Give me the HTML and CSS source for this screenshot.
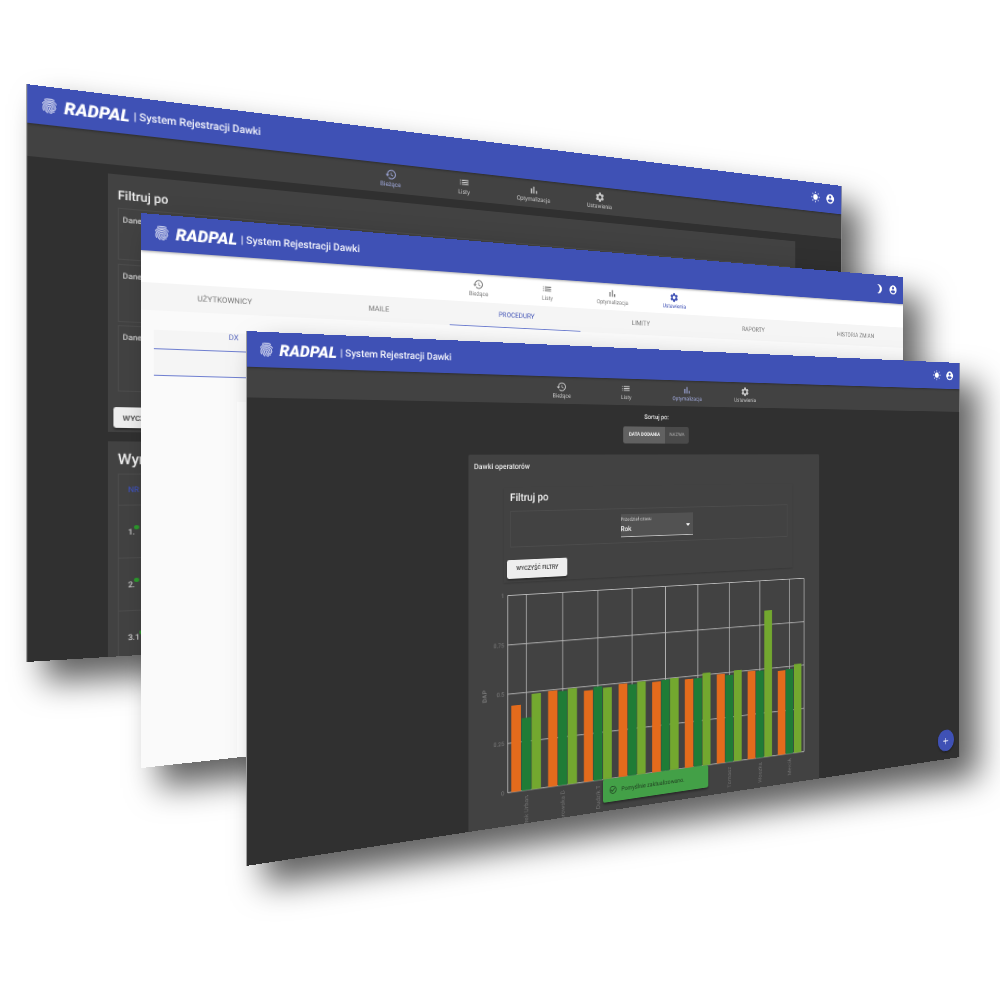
FILE: index.html
```html
<!DOCTYPE html>
<html lang="pl">
<head>
<meta charset="utf-8">
<title>RADPAL</title>
<link rel="stylesheet" href="styles.css">
</head>
<body>
<svg class="defs" aria-hidden="true">
<symbol id="i-print" viewBox="0 0 24 24"><path d="M17.81 4.47c-.08 0-.16-.02-.23-.06C15.66 3.42 14 3 12.01 3c-1.98 0-3.86.47-5.57 1.41-.24.13-.54.04-.68-.2-.13-.24-.04-.55.2-.68C7.82 2.52 9.86 2 12.01 2c2.13 0 3.99.47 6.03 1.52.25.13.34.43.21.67-.09.18-.26.28-.44.28zM3.5 9.72c-.1 0-.2-.03-.29-.09-.23-.16-.28-.47-.12-.7.99-1.4 2.25-2.5 3.75-3.27C9.98 4.04 14 4.03 17.15 5.65c1.5.77 2.76 1.86 3.75 3.25.16.22.11.54-.12.7-.23.16-.54.11-.7-.12-.9-1.26-2.04-2.25-3.39-2.94-2.87-1.47-6.54-1.47-9.4.01-1.36.7-2.5 1.7-3.4 2.96-.08.14-.23.21-.39.21zm6.25 12.07c-.13 0-.26-.05-.35-.15-.87-.87-1.34-1.43-2.01-2.64-.69-1.23-1.05-2.73-1.05-4.34 0-2.97 2.54-5.39 5.66-5.39s5.66 2.42 5.66 5.39c0 .28-.22.5-.5.5s-.5-.22-.5-.5c0-2.42-2.09-4.39-4.66-4.39-2.57 0-4.66 1.97-4.66 4.39 0 1.44.32 2.77.93 3.85.64 1.15 1.08 1.64 1.85 2.42.19.2.19.51 0 .71-.11.1-.24.15-.37.15zm7.17-1.85c-1.19 0-2.24-.3-3.1-.89-1.49-1.01-2.38-2.65-2.38-4.39 0-.28.22-.5.5-.5s.5.22.5.5c0 1.41.72 2.74 1.94 3.56.71.48 1.54.71 2.54.71.24 0 .64-.03 1.04-.1.27-.05.53.13.58.41.05.27-.13.53-.41.58-.57.11-1.07.12-1.21.12zM14.91 22c-.04 0-.09-.01-.13-.02-1.59-.44-2.63-1.03-3.72-2.1-1.4-1.39-2.17-3.24-2.17-5.22 0-1.62 1.38-2.94 3.08-2.94 1.7 0 3.08 1.32 3.08 2.94 0 1.07.93 1.94 2.08 1.94s2.08-.87 2.08-1.94c0-3.77-3.25-6.83-7.25-6.83-2.84 0-5.44 1.58-6.61 4.03-.39.81-.59 1.76-.59 2.8 0 .78.07 2.01.67 3.61.1.26-.03.55-.29.64-.26.1-.55-.04-.64-.29-.49-1.31-.73-2.61-.73-3.96 0-1.2.23-2.29.68-3.24 1.33-2.79 4.28-4.6 7.51-4.6 4.55 0 8.25 3.51 8.25 7.83 0 1.62-1.38 2.94-3.08 2.94s-3.08-1.32-3.08-2.94c0-1.07-.93-1.94-2.08-1.94s-2.08.87-2.08 1.94c0 1.71.66 3.31 1.87 4.51.95.94 1.86 1.46 3.27 1.85.27.07.42.35.35.61-.05.23-.26.38-.47.38z"/></symbol>
<symbol id="i-history" viewBox="0 0 24 24"><path d="M13 3c-4.97 0-9 4.03-9 9H1l3.89 3.89.07.14L9 12H6c0-3.87 3.13-7 7-7s7 3.13 7 7-3.13 7-7 7c-1.93 0-3.68-.79-4.94-2.06l-1.42 1.42C8.27 19.99 10.51 21 13 21c4.97 0 9-4.03 9-9s-4.03-9-9-9zm-1 5v5l4.28 2.54.72-1.21-3.5-2.08V8H12z"/></symbol>
<symbol id="i-list" viewBox="0 0 24 24"><path d="M3 13h2v-2H3v2zm0 4h2v-2H3v2zm0-8h2V7H3v2zm4 4h14v-2H7v2zm0 4h14v-2H7v2zM7 7v2h14V7H7z"/></symbol>
<symbol id="i-bars" viewBox="0 0 24 24"><path d="M5 9.2h3V19H5zM10.6 5h2.8v14h-2.8zm5.6 8H19v6h-2.8z"/></symbol>
<symbol id="i-gear" viewBox="0 0 24 24"><path d="M19.14 12.94c.04-.3.06-.61.06-.94 0-.32-.02-.64-.07-.94l2.03-1.58c.18-.14.23-.41.12-.61l-1.92-3.32c-.12-.22-.37-.29-.59-.22l-2.39.96c-.5-.38-1.03-.7-1.62-.94l-.36-2.54c-.04-.24-.24-.41-.48-.41h-3.84c-.24 0-.43.17-.47.41l-.36 2.54c-.59.24-1.13.57-1.62.94l-2.39-.96c-.22-.08-.47 0-.59.22L2.74 8.87c-.12.21-.08.47.12.61l2.03 1.58c-.05.3-.09.63-.09.94s.02.64.07.94l-2.03 1.58c-.18.14-.23.41-.12.61l1.92 3.32c.12.22.37.29.59.22l2.39-.96c.5.38 1.03.7 1.62.94l.36 2.54c.05.24.24.41.48.41h3.84c.24 0 .44-.17.47-.41l.36-2.54c.59-.24 1.13-.56 1.62-.94l2.39.96c.22.08.47 0 .59-.22l1.92-3.32c.12-.22.07-.47-.12-.61l-2.01-1.58zM12 15.6c-1.98 0-3.6-1.62-3.6-3.6s1.62-3.6 3.6-3.6 3.6 1.62 3.6 3.6-1.62 3.6-3.6 3.6z"/></symbol>
<symbol id="i-user" viewBox="0 0 24 24"><path d="M12 2C6.48 2 2 6.48 2 12s4.48 10 10 10 10-4.48 10-10S17.52 2 12 2zm0 3c1.66 0 3 1.34 3 3s-1.34 3-3 3-3-1.34-3-3 1.34-3 3-3zm0 14.2c-2.5 0-4.71-1.28-6-3.22.03-1.99 4-3.08 6-3.08 1.99 0 5.97 1.09 6 3.08-1.29 1.94-3.5 3.22-6 3.22z"/></symbol>
<symbol id="i-sun" viewBox="0 0 24 24"><path d="M6.76 4.84l-1.8-1.79-1.41 1.41 1.79 1.79 1.42-1.41zM4 10.5H1v2h3v-2zm9-9.95h-2V3.5h2V.55zm7.45 3.91l-1.41-1.41-1.79 1.79 1.41 1.41 1.79-1.79zm-3.21 13.7l1.79 1.8 1.41-1.41-1.8-1.79-1.4 1.4zM20 10.5v2h3v-2h-3zm-8-5c-3.31 0-6 2.69-6 6s2.69 6 6 6 6-2.69 6-6-2.69-6-6-6zm-1 16.95h2V19.5h-2v2.95zm-7.45-3.91l1.41 1.41 1.79-1.8-1.41-1.41-1.79 1.8z"/></symbol>
<symbol id="i-moon" viewBox="0 0 24 24"><path d="M9 2c-1.05 0-2.05.16-3 .46 4.06 1.27 7 5.06 7 9.54 0 4.48-2.94 8.27-7 9.54.95.3 1.95.46 3 .46 5.52 0 10-4.48 10-10S14.52 2 9 2z"/></symbol>
<symbol id="i-check" viewBox="0 0 24 24"><path d="M16.59 7.58L10 14.17l-3.59-3.58L5 12l5 5 8-8zM12 2C6.48 2 2 6.48 2 12s4.48 10 10 10 10-4.48 10-10S17.52 2 12 2zm0 18c-4.42 0-8-3.58-8-8s3.58-8 8-8 8 3.58 8 8-3.58 8-8 8z"/></symbol>
<symbol id="i-add" viewBox="0 0 24 24"><path d="M19 13h-6v6h-2v-6H5v-2h6V5h2v6h6v2z"/></symbol>
</svg>

<main class="scene">

<!-- back window: dark, search page -->
<div class="layer">
<section class="win win-back"><div class="page page-dark">
  <header class="bar">
    <svg class="logo"><use href="#i-print"/></svg>
    <span class="brand">RADPAL</span><span class="subtitle">| System Rejestracji Dawki</span>
    <span class="bar-icons"><svg class="icon"><use href="#i-sun"/></svg><svg class="icon"><use href="#i-user"/></svg></span>
  </header>
  <nav class="nav nav-shift">
    <a class="nav-item is-active"><svg class="icon"><use href="#i-history"/></svg><span>Bieżące</span></a>
    <a class="nav-item"><svg class="icon"><use href="#i-list"/></svg><span>Listy</span></a>
    <a class="nav-item"><svg class="icon"><use href="#i-bars"/></svg><span>Optymalizacja</span></a>
    <a class="nav-item"><svg class="icon"><use href="#i-gear"/></svg><span>Ustawienia</span></a>
  </nav>
  <div class="back-main">
    <div class="back-panel">
      <h2 class="filter-title">Filtruj po</h2>
      <div class="data-box box-a">Dane</div>
      <div class="data-box box-b">Dane</div>
      <div class="data-box box-c">Dane</div>
      <button class="clear-btn back-btn">WYCZYŚĆ FILTRY</button>
    </div>
    <div class="back-panel results">
      <h2 class="results-title">Wyniki</h2>
      <div class="table">
        <div class="th">NR</div>
        <div class="tr">1.<i class="dot"></i></div>
        <div class="tr">2.<i class="dot"></i></div>
        <div class="tr">3.1<i class="dot"></i></div>
      </div>
    </div>
  </div>
</div></section>
</div>

<!-- middle window: light, settings page -->
<div class="layer">
<section class="win win-mid"><div class="page page-light">
  <header class="bar">
    <svg class="logo"><use href="#i-print"/></svg>
    <span class="brand">RADPAL</span><span class="subtitle">| System Rejestracji Dawki</span>
    <span class="bar-icons"><svg class="icon"><use href="#i-moon"/></svg><svg class="icon"><use href="#i-user"/></svg></span>
  </header>
  <nav class="nav">
    <a class="nav-item"><svg class="icon"><use href="#i-history"/></svg><span>Bieżące</span></a>
    <a class="nav-item"><svg class="icon"><use href="#i-list"/></svg><span>Listy</span></a>
    <a class="nav-item"><svg class="icon"><use href="#i-bars"/></svg><span>Optymalizacja</span></a>
    <a class="nav-item is-active"><svg class="icon"><use href="#i-gear"/></svg><span>Ustawienia</span></a>
  </nav>
  <div class="tabs">
    <span class="tab">UŻYTKOWNICY</span>
    <span class="tab">MAILE</span>
    <span class="tab is-on">PROCEDURY</span>
    <span class="tab">LIMITY</span>
    <span class="tab">RAPORTY</span>
    <span class="tab">HISTORIA ZMIAN</span>
  </div>
  <div class="sub">
    <div class="sub-tab">DX</div>
    <div class="sub-row"></div>
  </div>
  <div class="sub-card"></div>
</div></section>
</div>

<!-- front window: dark, optimisation page -->
<div class="layer">
<section class="win win-front"><div class="page page-dark">
  <header class="bar">
    <svg class="logo"><use href="#i-print"/></svg>
    <span class="brand">RADPAL</span><span class="subtitle">| System Rejestracji Dawki</span>
    <span class="bar-icons"><svg class="icon"><use href="#i-sun"/></svg><svg class="icon"><use href="#i-user"/></svg></span>
  </header>
  <nav class="nav">
    <a class="nav-item"><svg class="icon"><use href="#i-history"/></svg><span>Bieżące</span></a>
    <a class="nav-item"><svg class="icon"><use href="#i-list"/></svg><span>Listy</span></a>
    <a class="nav-item is-active"><svg class="icon"><use href="#i-bars"/></svg><span>Optymalizacja</span></a>
    <a class="nav-item"><svg class="icon"><use href="#i-gear"/></svg><span>Ustawienia</span></a>
  </nav>
  <div class="sort">
    <p class="sort-label">Sortuj po:</p>
    <div class="toggle"><span class="toggle-on">DATA DODANIA</span><span class="toggle-off">NAZWA</span></div>
  </div>
  <div class="panel">
    <h3 class="panel-title">Dawki operatorów</h3>
    <div class="filter-card">
      <h2 class="filter-title">Filtruj po</h2>
      <div class="filter-box">
        <div class="select">
          <span class="select-label">Przedział czasu</span>
          <span class="select-value">Rok</span>
          <i class="caret"></i>
        </div>
      </div>
      <button class="clear-btn front-btn">WYCZYŚĆ FILTRY</button>
    </div>
    <svg class="chart" viewBox="0 0 800 450" width="800" height="450">
      <g class="grid">
        <line x1="78" y1="21" x2="760" y2="21"/><line x1="78" y1="112.75" x2="760" y2="112.75"/><line x1="78" y1="204.5" x2="760" y2="204.5"/><line x1="78" y1="296.25" x2="760" y2="296.25"/><line x1="78" y1="388" x2="760" y2="388"/>
        <line x1="78" y1="21" x2="78" y2="388"/><line x1="115.9" y1="21" x2="115.9" y2="388"/><line x1="191.7" y1="21" x2="191.7" y2="388"/><line x1="267.5" y1="21" x2="267.5" y2="388"/><line x1="343.3" y1="21" x2="343.3" y2="388"/><line x1="419.1" y1="21" x2="419.1" y2="388"/><line x1="494.9" y1="21" x2="494.9" y2="388"/><line x1="570.7" y1="21" x2="570.7" y2="388"/><line x1="646.5" y1="21" x2="646.5" y2="388"/><line x1="722.3" y1="21" x2="722.3" y2="388"/><line x1="760" y1="21" x2="760" y2="388"/>
      </g>
      <g class="s-orange">
        <rect x="85.4" y="226.5" width="19.5" height="161.5"/><rect x="161.2" y="206.3" width="19.5" height="181.7"/><rect x="237" y="212.6" width="19.5" height="175.4"/><rect x="312.8" y="206.3" width="19.5" height="181.7"/><rect x="388.6" y="208.9" width="19.5" height="179.1"/><rect x="464.4" y="210" width="19.5" height="178"/><rect x="540.2" y="206.3" width="19.5" height="181.7"/><rect x="616" y="206.3" width="19.5" height="181.7"/><rect x="691.8" y="211.8" width="19.5" height="176.2"/>
      </g>
      <g class="s-green">
        <rect x="106.15" y="252.2" width="19.5" height="135.8"/><rect x="181.95" y="208.9" width="19.5" height="179.1"/><rect x="257.75" y="207.1" width="19.5" height="180.9"/><rect x="333.55" y="209.3" width="19.5" height="178.7"/><rect x="409.35" y="206.7" width="19.5" height="181.3"/><rect x="485.15" y="210" width="19.5" height="178"/><rect x="560.95" y="210" width="19.5" height="178"/><rect x="636.75" y="207.4" width="19.5" height="180.6"/><rect x="712.55" y="210" width="19.5" height="178"/>
      </g>
      <g class="s-lime">
        <rect x="126.9" y="208.2" width="19.5" height="179.8"/><rect x="202.7" y="205.6" width="19.5" height="182.4"/><rect x="278.5" y="210.4" width="19.5" height="177.6"/><rect x="354.3" y="205.6" width="19.5" height="182.4"/><rect x="430.1" y="205.2" width="19.5" height="182.8"/><rect x="505.9" y="200.8" width="19.5" height="187.2"/><rect x="581.7" y="201.6" width="19.5" height="186.4"/><rect x="657.5" y="83.4" width="19.5" height="304.6"/><rect x="733.3" y="200.8" width="19.5" height="187.2"/>
      </g>
      <g class="y-labels">
        <text x="71" y="25">1</text><text x="71" y="117">0.75</text><text x="71" y="208">0.5</text><text x="71" y="300">0.25</text><text x="71" y="392">0</text>
      </g>
      <text class="y-title" transform="translate(36 205) rotate(-90)">DAP</text>
      <g class="x-labels">
        <text transform="translate(120 398) rotate(-90)">Marek Urban</text>
        <text transform="translate(196 398) rotate(-90)">Dąbrowska D</text>
        <text transform="translate(272 398) rotate(-90)">Dudzik T</text>
        <text transform="translate(347 398) rotate(-90)">Gajda</text>
        <text transform="translate(423 398) rotate(-90)">Kania</text>
        <text transform="translate(499 398) rotate(-90)">Kos</text>
        <text transform="translate(575 398) rotate(-90)">Tomasz</text>
        <text transform="translate(651 398) rotate(-90)">Woszka</text>
        <text transform="translate(726 398) rotate(-90)">Mercik</text>
      </g>
    </svg>
  </div>
  <div class="snackbar"><svg class="icon snack-icon"><use href="#i-check"/></svg>Pomyślnie zaktualizowano.</div>
  <button class="fab" aria-label="Dodaj"><svg class="icon fab-icon"><use href="#i-add"/></svg></button>
</div></section>
</div>

</main>
</body>
</html>
```
FILE: styles.css
```css
* { box-sizing: border-box; }
html, body { margin: 0; padding: 0; background: #fff; }
body { font-family: Roboto, "Noto Sans", "Liberation Sans", sans-serif; text-rendering: geometricPrecision; }
.defs { position: absolute; width: 0; height: 0; }

.scene { position: relative; width: 1000px; height: 1000px; overflow: hidden; background: #fff; }
.layer { position: absolute; inset: 0; filter: blur(0.5px) drop-shadow(18px 20px 16px rgba(0, 0, 0, 0.62)); }

/* windows lying on a free canvas, tilted in perspective */
.win { position: absolute; left: 0; top: 0; width: 960px; height: 540px; overflow: hidden; transform-origin: 0 0; }
.win-back { transform: matrix3d(1.16295,.17539,0,.00037168, 0,1.07037,0,0, 0,0,1,0, 26,84,0,1); }
.win-mid { transform: matrix3d(1.13336,.17063,0,.00037531, 0,1.02778,0,0, 0,0,1,0, 141,213,0,1); }
.win-front { transform: matrix3d(1.10161,.16866,0,.00037278, 0,.99074,0,0, 0,0,1,0, 246,331,0,1); }

.page { zoom: .6; position: relative; width: 1600px; height: 900px; overflow: hidden; }
.page-dark { background: #303030; color: #fff; border-left: 2px solid #a0a0a0; border-right: 2px solid #a0a0a0; }
.page-light { background: #fafafa; color: #555; }

.icon { width: 24px; height: 24px; fill: currentColor; display: block; flex: none; }

.bar { height: 60px; background: #3f51b5; color: #fff; display: flex; align-items: center; padding: 0 18px; position: relative; box-shadow: 0 2px 4px rgba(0, 0, 0, .35); }
.logo { width: 28px; height: 30px; fill: #e2e5f6; stroke: #e2e5f6; stroke-width: .35; flex: none; }
.brand { margin-left: 8px; font-size: 27px; font-weight: 900; font-style: italic; letter-spacing: .2px; }
.subtitle { margin-left: 6px; font-size: 17.5px; font-weight: 500; color: #f2f3fb; }
.bar-icons { margin-left: auto; display: flex; gap: 14px; }

.nav { height: 52px; display: flex; justify-content: center; background: #424242; color: #c8c8c8; }
.nav-shift { padding-left: 14px; }
.page-light .nav { background: #fff; color: #777; }
.nav-item { width: 140px; display: flex; flex-direction: column; align-items: center; justify-content: center; font-size: 11px; line-height: 13px; }
.nav-item .icon { width: 22px; height: 22px; margin-bottom: 1px; }
.nav-item.is-active { color: #9fa8da; }
.page-light .nav-item.is-active { color: #3f51b5; }

/* back window */
.back-main { padding: 14px 120px 0; }
.back-panel { background: #424242; padding: 22px 15px 6px; }
.back-panel.results { margin-top: 15px; padding-top: 18px; }
.filter-title { margin: 0; font-size: 20px; line-height: 24px; font-weight: 500; color: #f0f0f0; }
.data-box { border: 1px solid #4c4c4c; font-size: 13px; font-weight: 500; color: #ccc; padding: 10px 6px; margin-bottom: 6px; }
.box-a { margin-top: 8px; height: 84px; }
.box-b { height: 93px; }
.box-c { height: 106px; }
.clear-btn { border: 0; border-radius: 4px; background: #eee; color: #3a3a3a; font: 500 11px Roboto, sans-serif; box-shadow: 0 2px 3px rgba(0, 0, 0, .3); padding: 0; }
.back-btn { display: block; margin: 25px 0 0 -7px; width: 132px; height: 34px; font-size: 13px; }
.results-title { margin: 0 0 10px; font-size: 24px; line-height: 24px; font-weight: 500; color: #eee; }
.table { border: 1px solid #4c4c4c; }
.th { height: 50px; padding-left: 14px; line-height: 50px; font-size: 13px; font-weight: 500; color: #3f51b5; border-bottom: 1px solid #4c4c4c; }
.tr { height: 85px; padding-left: 14px; line-height: 85px; font-size: 13px; font-weight: 500; color: #d0d0d0; border-bottom: 1px solid #4c4c4c; }
.dot { display: inline-block; width: 8px; height: 8px; border-radius: 50%; background: #2c9c2c; margin-left: -1px; vertical-align: 8px; }

/* middle window */
.tabs { height: 44px; display: flex; background: #f5f5f5; }
.tab { flex: 1; display: flex; align-items: center; justify-content: center; font-size: 13px; color: #777; }
.tab.is-on { color: #3f51b5; border-bottom: 2px solid #6f7fd0; }
.sub { margin: 33px 0 0 20px; background: #f5f5f5; }
.sub-tab { width: 256px; height: 31px; text-align: center; font-size: 13px; line-height: 18px; color: #5c6bc0; border-bottom: 2px solid #6f7fd0; }
.sub-row { width: 256px; height: 44px; border-bottom: 2px solid #6f7fd0; }
.sub-card { margin: 39px 0 0 153px; height: 600px; background: #fff; }

/* front window */
.sort { padding-top: 14px; display: flex; flex-direction: column; align-items: center; margin-right: 3px; }
.sort-label { margin: 0; font-size: 13px; line-height: 16px; font-weight: 500; color: #e4e4e4; }
.toggle { margin-top: 11px; height: 34px; display: flex; font-size: 10px; font-weight: 700; border-radius: 4px; overflow: hidden; }
.toggle-on { width: 95px; display: flex; align-items: center; justify-content: center; background: #616161; color: #eee; }
.toggle-off { width: 54px; display: flex; align-items: center; justify-content: center; background: #4a4a4a; color: #8f8f8f; }

.panel { width: 800px; height: 700px; margin: 22px auto 0; background: #424242; border-radius: 3px; padding-top: 16px; }
.panel-title { margin: 0 0 0 11px; font-size: 14px; line-height: 16px; font-weight: 500; color: #e8e8e8; }
.filter-card { margin: 29px 70px 0; padding: 7px 13px 7px; box-shadow: 0 2px 3px rgba(0, 0, 0, .16); height: 177px; }
.filter-box { margin-top: 12px; height: 69px; border: 1px solid #4c4c4c; display: flex; justify-content: center; padding-top: 10px; }
.select { position: relative; width: 165px; height: 45px; background: #525252; border-bottom: 2px solid #bdbdbd; padding: 5px 0 0 0; }
.select-label { display: block; font-size: 10px; line-height: 12px; color: #c4c4c4; }
.select-value { display: block; margin-top: 6px; font-size: 14px; line-height: 15px; font-weight: 500; color: #f2f2f2; }
.caret { position: absolute; right: 6px; top: 22px; width: 0; height: 0; border: 5px solid transparent; border-top-color: #fff; border-bottom: 0; }
.front-btn { display: block; margin: 23px 0 0 -6px; width: 124px; height: 35px; }

.chart { display: block; margin-top: 3px; overflow: visible; }
.grid line { stroke: #b8b8b8; stroke-width: 1.6; }
.s-orange { fill: #e36b1c; }
.s-green { fill: #1f7c36; }
.s-lime { fill: #73a82f; }
.y-labels text { font-size: 11px; fill: #808080; text-anchor: end; }
.y-title { font-size: 12px; font-weight: 500; fill: #808080; text-anchor: middle; }
.x-labels text { font-size: 12px; fill: #707070; text-anchor: end; }

.snackbar { position: absolute; left: 676px; top: 839px; width: 243px; height: 44px; background: #43a047; color: #1f3d20; border-radius: 4px; display: flex; align-items: center; padding-left: 14px; font-size: 12px; box-shadow: 0 3px 5px rgba(0, 0, 0, .4); }
.snack-icon { width: 18px; height: 18px; margin-right: 9px; }
.fab { position: absolute; left: 1532px; top: 834px; width: 48px; height: 48px; border: 0; border-radius: 50%; background: #3f51b5; color: #fff; padding: 12px; box-shadow: 0 3px 5px rgba(0, 0, 0, .35); }
.fab-icon { width: 24px; height: 24px; }
```
